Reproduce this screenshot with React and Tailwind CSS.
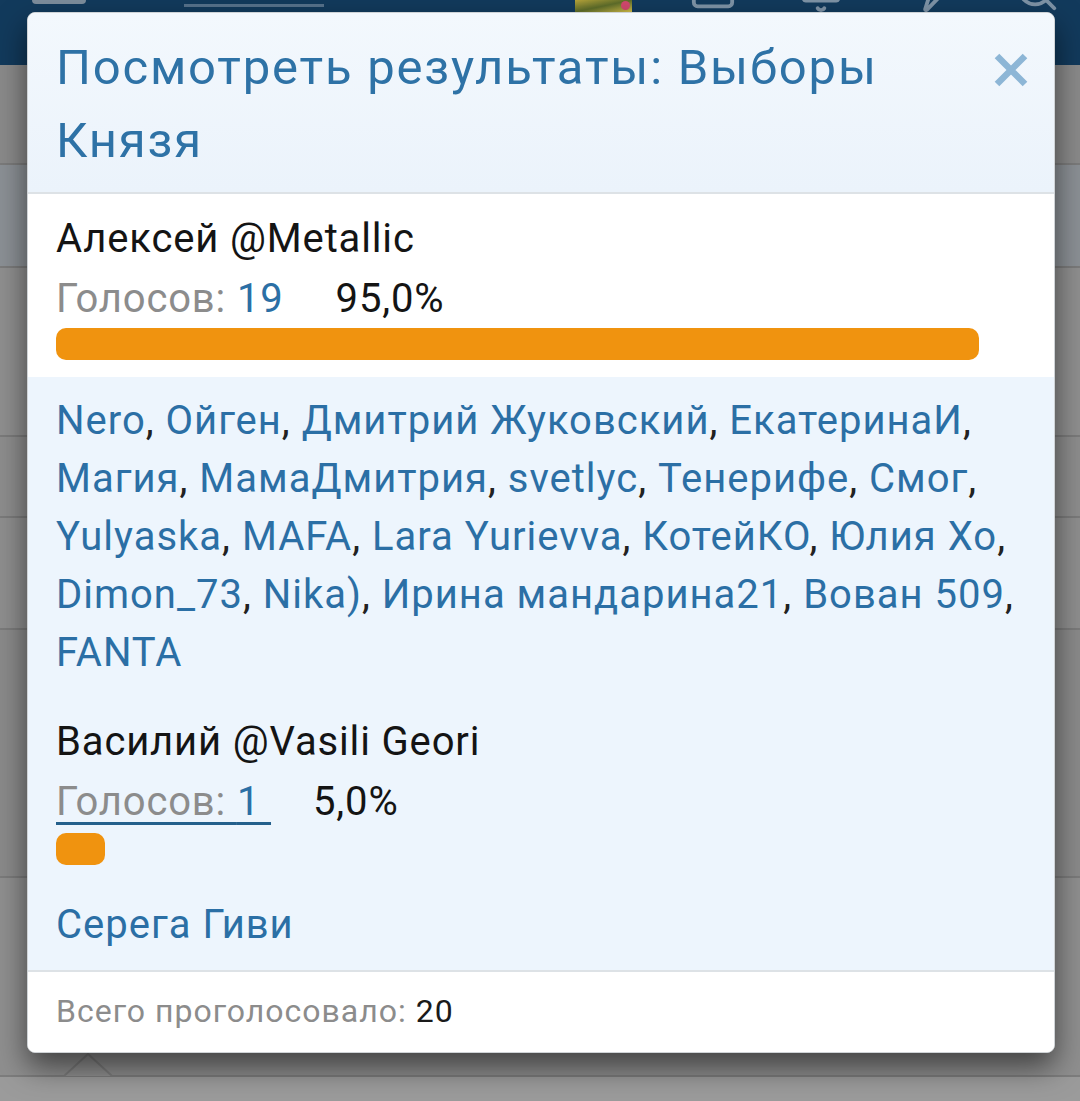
import { Mail, Bell, Zap, Search } from "lucide-react";

const voters1 = [
  "Nero",
  "Ойген",
  "Дмитрий Жуковский",
  "ЕкатеринаИ",
  "Магия",
  "МамаДмитрия",
  "svetlyc",
  "Тенерифе",
  "Смог",
  "Yulyaska",
  "MAFA",
  "Lara Yurievva",
  "КотейКО",
  "Юлия Хо",
  "Dimon_73",
  "Nika)",
  "Ирина мандарина21",
  "Вован 509",
  "FANTA",
];

function VoterList({ names }) {
  return (
    <p className="text-[40px] leading-[58px] tracking-[1px] text-[#222]">
      {names.map((n, i) => (
        <span key={n}>
          <a className="text-[#2b6fa5]">{n}</a>
          {i < names.length - 1 ? ", " : ""}
        </span>
      ))}
    </p>
  );
}

function Bar({ width }) {
  return (
    <div className="h-[32px] w-full">
      <div className="h-full rounded-[10px] bg-[#f0930f]" style={{ width }} />
    </div>
  );
}

export default function App() {
  return (
    <div className="relative h-[1101px] w-[1080px] overflow-hidden bg-[#9b9b9b] font-['Roboto',sans-serif]">
      {/* page behind the dimmed overlay */}
      <div className="flex flex-col">
        <div className="flex h-[65px] items-start bg-[#123a5c] px-[32px]">
          <div className="h-[4px] w-[54px] shrink-0 rounded-b bg-[#7d8d9c]" />
          <div className="ml-[98px] mt-[4px] h-[3px] w-[140px] shrink-0 bg-[#56718b]" />
          <div className="ml-[251px] flex h-[12px] w-[57px] shrink-0 items-end justify-end overflow-hidden bg-gradient-to-br from-[#b7a43a] via-[#5e6d2a] to-[#d8c24a]">
            <div className="mb-[2px] mr-[2px] h-[9px] w-[9px] rounded-full bg-[#d2486e]" />
          </div>
          <div className="ml-[58px] -mt-[32px] flex gap-[62px] text-[#7e93a6]">
            <Mail size={46} strokeWidth={2} />
            <Bell size={46} strokeWidth={2} />
            <Zap size={46} strokeWidth={2} />
            <Search size={46} strokeWidth={2} />
          </div>
        </div>
        <div className="h-[100px] border-b-2 border-[#7b7b7b] bg-[#8a8a8a]" />
        <div className="h-[103px] border-b-2 border-[#7b7b7b] bg-[#8b9095]" />
        <div className="h-[169px] border-b-2 border-[#7b7b7b] bg-[#8f8f8f]" />
        <div className="h-[81px] border-b-2 border-[#7b7b7b] bg-[#8d8d8d]" />
        <div className="h-[112px] border-b-2 border-[#7b7b7b] bg-[#8e8e8e]" />
        <div className="h-[248px] border-b-2 border-[#7b7b7b] bg-[#8a8a8a]" />
        <div className="relative h-[199px] border-b-2 border-[#7d7d7d] bg-[#8f8f8f]">
          <svg className="absolute bottom-[-2px] left-[64px]" width="50" height="24" viewBox="0 0 50 24">
            <path d="M0 23 L24 1 L48 23" fill="#909090" stroke="#7d7d7d" strokeWidth="2" />
          </svg>
        </div>
      </div>

      {/* modal */}
      <div className="absolute left-[27px] top-[12px] w-[1028px] overflow-hidden rounded-[8px] border border-[#cfd3d6] bg-white shadow-[0_14px_30px_rgba(0,0,0,0.55)]">
        <div className="flex items-start justify-between bg-gradient-to-b from-[#f3f8fd] to-[#ebf3fb] pb-[15px] pl-[28px] pr-[26px] pt-[18px]">
          <h2 className="text-[49px] leading-[73px] tracking-[1.8px] text-[#2e72a6]">
            Посмотреть результаты: Выборы Князя
          </h2>
          <button className="mt-[22px] shrink-0 text-[#8db6d6]">
            <svg width="34" height="34" viewBox="0 0 34 34">
              <path d="M3 3 L31 31 M31 3 L3 31" stroke="currentColor" strokeWidth="6.5" />
            </svg>
          </button>
        </div>

        <div className="border-t-2 border-[#dde2e6] bg-white px-[28px] pb-[17px] pt-[16px]">
          <div className="text-[40px] leading-[58px] tracking-[0.85px] text-[#141414]">Алексей @Metallic</div>
          <div className="mt-[2px] text-[40px] leading-[58px] tracking-[0.85px]">
            <span className="text-[#8c8c8c]">Голосов: </span>
            <span className="text-[#2b6fa5]">19</span>
            <span className="ml-[52px] text-[#141414]">95,0%</span>
          </div>
          <Bar width="923px" />
        </div>

        <div className="bg-[#edf5fd] px-[28px] pb-[16px] pt-[15px]">
          <VoterList names={voters1} />
          <div className="mt-[31px] text-[40px] leading-[58px] tracking-[0.85px] text-[#141414]">Василий @Vasili Geori</div>
          <div className="mt-[2px] text-[40px] leading-[58px] tracking-[0.85px]">
            <span className="underline decoration-[#24608c] decoration-[3px] underline-offset-[7px]">
              <span className="text-[#8c8c8c]">Голосов: </span>
              <span className="text-[#2b6fa5]">1 </span>
            </span>
            <span className="ml-[42px] text-[#141414]">5,0%</span>
          </div>
          <div className="mt-[2px]">
            <Bar width="49px" />
          </div>
          <div className="mt-[31px]">
            <VoterList names={["Серега Гиви"]} />
          </div>
        </div>

        <div className="border-t-2 border-[#dde2e6] bg-white px-[28px] pb-[19px] pt-[17px] text-[32px] leading-[44px] tracking-[1px]">
          <span className="text-[#8c8c8c]">Всего проголосовало: </span>
          <span className="text-[#1a1a1a]">20</span>
        </div>
      </div>
    </div>
  );
}
